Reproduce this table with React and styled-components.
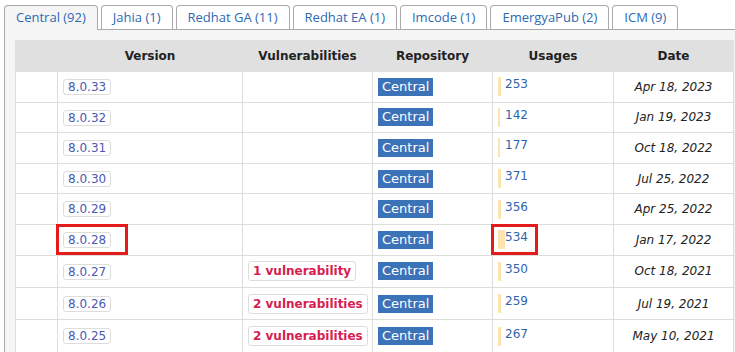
import React from 'react';
import styled, { createGlobalStyle } from 'styled-components';

const GlobalStyle = createGlobalStyle`
	body {
		margin: 0;
		background: #fff;
		font-family: "DejaVu Sans", Verdana, sans-serif;
		font-size: 12px;
		color: #222;
	}
`;

const Page = styled.div`
	padding-top: 5px;
	margin-left: 4px;
	overflow: hidden;
`;

const TabBar = styled.div`
	display: flex;
	align-items: flex-start;
	gap: 3px;
	height: 24px;
	border-bottom: 1px solid #aaa;
`;

const Tab = styled.div`
	box-sizing: border-box;
	height: ${(p) => (p.$active ? '25px' : '24px')};
	padding: 0 11px;
	border: 1px solid #aaa;
	border-bottom: none;
	border-radius: 4px 4px 0 0;
	background: ${(p) => (p.$active ? '#f5f5f5' : '#fff')};
	color: #2e69b3;
	font-family: "Open Sans", "Noto Sans", sans-serif;
	font-size: 13px;
	line-height: 22px;
	white-space: nowrap;
	position: relative;
	z-index: 1;
`;

const Panel = styled.div`
	background: #f5f5f5;
	border-left: 1px solid #aaa;
	padding: 10px 0 10px 10px;
`;

const Table = styled.table`
	border-collapse: collapse;
	background: #fff;
	table-layout: fixed;
	width: 718px;
`;

const HeadCell = styled.th`
	background: #e0e0e0;
	height: 30px;
	padding: 0 6px;
	font-weight: bold;
	font-size: 12px;
	text-align: center;
	color: #222;
	border: 1px solid #e0e0e0;
`;

const Cell = styled.td`
	position: relative;
	border: 1px solid #ddd;
	padding: 0 5px;
	height: ${(p) => (p.$tall ? '32.4px' : '30.6px')};
	box-sizing: border-box;
	line-height: 16px;
	vertical-align: middle;
	text-align: ${(p) => p.$align || 'left'};
	font-style: ${(p) => (p.$italic ? 'italic' : 'normal')};
	white-space: nowrap;
`;

const VersionTag = styled.span`
	display: inline-block;
	vertical-align: middle;
	border: 1px solid #ddd;
	border-radius: 3px;
	padding: 0 4px;
	line-height: 14px;
	color: #4a5ab0;
	background: #fff;
`;

const VulnTag = styled.span`
	display: inline-block;
	vertical-align: middle;
	border: 1px solid #ddd;
	border-radius: 3px;
	padding: 0 4px;
	line-height: 18px;
	font-weight: bold;
	color: #d6204e;
	background: #fff;
`;

const RepoTag = styled.span`
	display: inline-block;
	vertical-align: middle;
	background: #3c72b8;
	color: #fff;
	font-size: 13px;
	line-height: 18px;
	padding: 0 4px;
`;

const Usage = styled.span`
	position: relative;
	display: inline-block;
	vertical-align: middle;
	padding-left: 7px;
	height: 19px;
	line-height: 15px;
	color: #2e64ad;
`;

const UsageBar = styled.span`
	position: absolute;
	left: 0;
	top: 0;
	bottom: 0;
	background: #fde3ad;
`;

const UsageNum = styled.span`
	position: relative;
`;

const Highlight = styled.span`
	position: absolute;
	top: -0.5px;
	bottom: -0.5px;
	left: ${(p) => p.$left}px;
	width: ${(p) => p.$width}px;
	box-sizing: border-box;
	border: 3px solid #e31b1b;
	z-index: 2;
`;

const tabs = [
	{ label: 'Central (92)', active: true },
	{ label: 'Jahia (1)' },
	{ label: 'Redhat GA (11)' },
	{ label: 'Redhat EA (1)' },
	{ label: 'Imcode (1)' },
	{ label: 'EmergyaPub (2)' },
	{ label: 'ICM (9)' },
];

const rows = [
	{ v: '8.0.33', n: 253, bar: 3, d: 'Apr 18, 2023' },
	{ v: '8.0.32', n: 142, bar: 2, d: 'Jan 19, 2023' },
	{ v: '8.0.31', n: 177, bar: 2, d: 'Oct 18, 2022' },
	{ v: '8.0.30', n: 371, bar: 3, d: 'Jul 25, 2022' },
	{ v: '8.0.29', n: 356, bar: 3, d: 'Apr 25, 2022' },
	{ v: '8.0.28', n: 534, bar: 7, d: 'Jan 17, 2022', mark: true },
	{ v: '8.0.27', n: 350, bar: 3, d: 'Oct 18, 2021', vuln: '1 vulnerability' },
	{ v: '8.0.26', n: 259, bar: 3, d: 'Jul 19, 2021', vuln: '2 vulnerabilities' },
	{ v: '8.0.25', n: 267, bar: 3, d: 'May 10, 2021', vuln: '2 vulnerabilities' },
];

const App = () => {
	return (
		<Page>
			<GlobalStyle />
			<TabBar>
				{tabs.map((t) => (
					<Tab key={t.label} $active={t.active}>
						{t.label}
					</Tab>
				))}
			</TabBar>
			<Panel>
				<Table>
					<colgroup>
						<col style={{ width: 42 }} />
						<col style={{ width: 185 }} />
						<col style={{ width: 130 }} />
						<col style={{ width: 120 }} />
						<col style={{ width: 121 }} />
						<col style={{ width: 120 }} />
					</colgroup>
					<thead>
						<tr>
							<HeadCell />
							<HeadCell>Version</HeadCell>
							<HeadCell>Vulnerabilities</HeadCell>
							<HeadCell>Repository</HeadCell>
							<HeadCell>Usages</HeadCell>
							<HeadCell>Date</HeadCell>
						</tr>
					</thead>
					<tbody>
						{rows.map((r) => {
							const tall = Boolean(r.vuln);
							return (
								<tr key={r.v}>
									<Cell $tall={tall} />
									<Cell $tall={tall}>
										<VersionTag>{r.v}</VersionTag>
										{r.mark && <Highlight $left={-2} $width={72} />}
									</Cell>
									<Cell $tall={tall}>{r.vuln && <VulnTag>{r.vuln}</VulnTag>}</Cell>
									<Cell $tall={tall}>
										<RepoTag>Central</RepoTag>
									</Cell>
									<Cell $tall={tall}>
										<Usage>
											<UsageBar style={{ width: r.bar }} />
											<UsageNum>{r.n}</UsageNum>
										</Usage>
										{r.mark && <Highlight $left={-2} $width={47} />}
									</Cell>
									<Cell $tall={tall} $align="center" $italic>
										{r.d}
									</Cell>
								</tr>
							);
						})}
					</tbody>
				</Table>
			</Panel>
		</Page>
	);
};

export default App;
